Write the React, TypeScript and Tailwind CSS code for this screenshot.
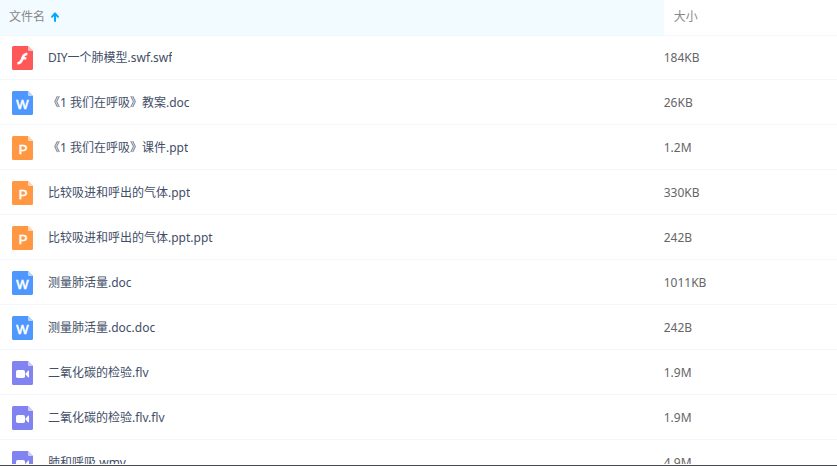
type FileKind = 'flash' | 'word' | 'slides' | 'video'

type FileItem = {
  name: string
  size: string
  kind: FileKind
}

const FILES: FileItem[] = [
  { name: 'DIY一个肺模型.swf.swf', size: '184KB', kind: 'flash' },
  { name: '《1 我们在呼吸》教案.doc', size: '26KB', kind: 'word' },
  { name: '《1 我们在呼吸》课件.ppt', size: '1.2M', kind: 'slides' },
  { name: '比较吸进和呼出的气体.ppt', size: '330KB', kind: 'slides' },
  { name: '比较吸进和呼出的气体.ppt.ppt', size: '242B', kind: 'slides' },
  { name: '测量肺活量.doc', size: '1011KB', kind: 'word' },
  { name: '测量肺活量.doc.doc', size: '242B', kind: 'word' },
  { name: '二氧化碳的检验.flv', size: '1.9M', kind: 'video' },
  { name: '二氧化碳的检验.flv.flv', size: '1.9M', kind: 'video' },
  { name: '肺和呼吸.wmv', size: '4.9M', kind: 'video' },
]

const ICON_COLORS: Record<FileKind, { page: string; fold: string }> = {
  flash: { page: '#ff5858', fold: '#ffbcbc' },
  word: { page: '#4d97ff', fold: '#b8d5ff' },
  slides: { page: '#ff9743', fold: '#ffd5b4' },
  video: { page: '#8183f1', fold: '#cdcdf9' },
}

function FileIcon({ kind }: { kind: FileKind }) {
  const { page, fold } = ICON_COLORS[kind]

  return (
    <svg
      className="block h-6 w-[21px] shrink-0 font-['Liberation_Sans',sans-serif]"
      viewBox="0 0 21 24"
      aria-hidden="true"
    >
      <path d="M1.5 0H16l5 5v17.5a1.5 1.5 0 0 1-1.5 1.5h-18A1.5 1.5 0 0 1 0 22.5v-21A1.5 1.5 0 0 1 1.5 0z" fill={page} />
      <path d="M16 0l5 5h-4a1 1 0 0 1-1-1z" fill={fold} />
      {kind === 'flash' && (
        <path
          d="M15.4 6.8v2.5c-1.6 0-2.5.7-3 1.9h1.9v2.2h-2.8c-1.1 2.9-2.8 5.1-6.2 5.2v-2.4c2.2-.2 3.1-2 3.9-4.2 1.1-3 2.6-5.2 6.2-5.2z"
          fill="#fff"
        />
      )}
      {kind === 'word' && (
        <text x="10.5" y="18" textAnchor="middle" fill="#fff" stroke="#fff" strokeWidth="0.6" fontSize="13">
          W
        </text>
      )}
      {kind === 'slides' && (
        <text x="11" y="18" textAnchor="middle" fill="#fff" stroke="#fff" strokeWidth="0.6" fontSize="13">
          P
        </text>
      )}
      {kind === 'video' && (
        <>
          <rect x="4" y="9" width="9" height="8" rx="1.8" fill="#fff" />
          <path d="M13.6 12.4l2.4-2.6c.4-.4 1-.2 1 .4v5.6c0 .6-.6.8-1 .4l-2.4-2.6z" fill="#fff" />
        </>
      )}
    </svg>
  )
}

function App() {
  return (
    <div className="flex h-screen flex-col border-b border-[#454a50] bg-white pb-px font-['Noto_Sans','Noto_Sans_CJK_SC',sans-serif] text-xs">
      <div className="min-h-0 flex-1 overflow-hidden">
        <table className="w-full table-fixed border-separate border-spacing-0 text-left">
          <thead>
            <tr className="h-9 text-[#888]">
              <th className="w-[79.3%] border-b border-[#f2f6fd] bg-[#f2fbff] p-0 pb-px pl-[9px] font-normal">
                <button type="button" className="flex cursor-pointer items-center gap-1.5">
                  文件名
                  <svg className="h-2.5 w-2" viewBox="0 0 8 10" aria-hidden="true">
                    <path
                      d="M4 9V1.6M1 4.8l3-3.4 3 3.4"
                      fill="none"
                      stroke="#06a7ff"
                      strokeWidth="2"
                      strokeLinecap="round"
                      strokeLinejoin="round"
                    />
                  </svg>
                </button>
              </th>
              <th className="border-b border-[#f2f6fd] p-0 pb-px pl-2.5 font-normal">大小</th>
            </tr>
          </thead>
          <tbody>
            {FILES.map((file) => (
              <tr key={file.name} className="group h-[45px] first:h-11">
                <td className="border-b border-[#f2f6fd] p-0 pt-0.5 pl-3 group-first:pt-0">
                  <a href="#" className="flex items-center gap-[15px] text-[#424e67]">
                    <FileIcon kind={file.kind} />
                    <span className="truncate">{file.name}</span>
                  </a>
                </td>
                <td className="border-b border-[#f2f6fd] p-0 pt-0.5 text-[#666] group-first:pt-0">{file.size}</td>
              </tr>
            ))}
          </tbody>
        </table>
      </div>
    </div>
  )
}

export default App
